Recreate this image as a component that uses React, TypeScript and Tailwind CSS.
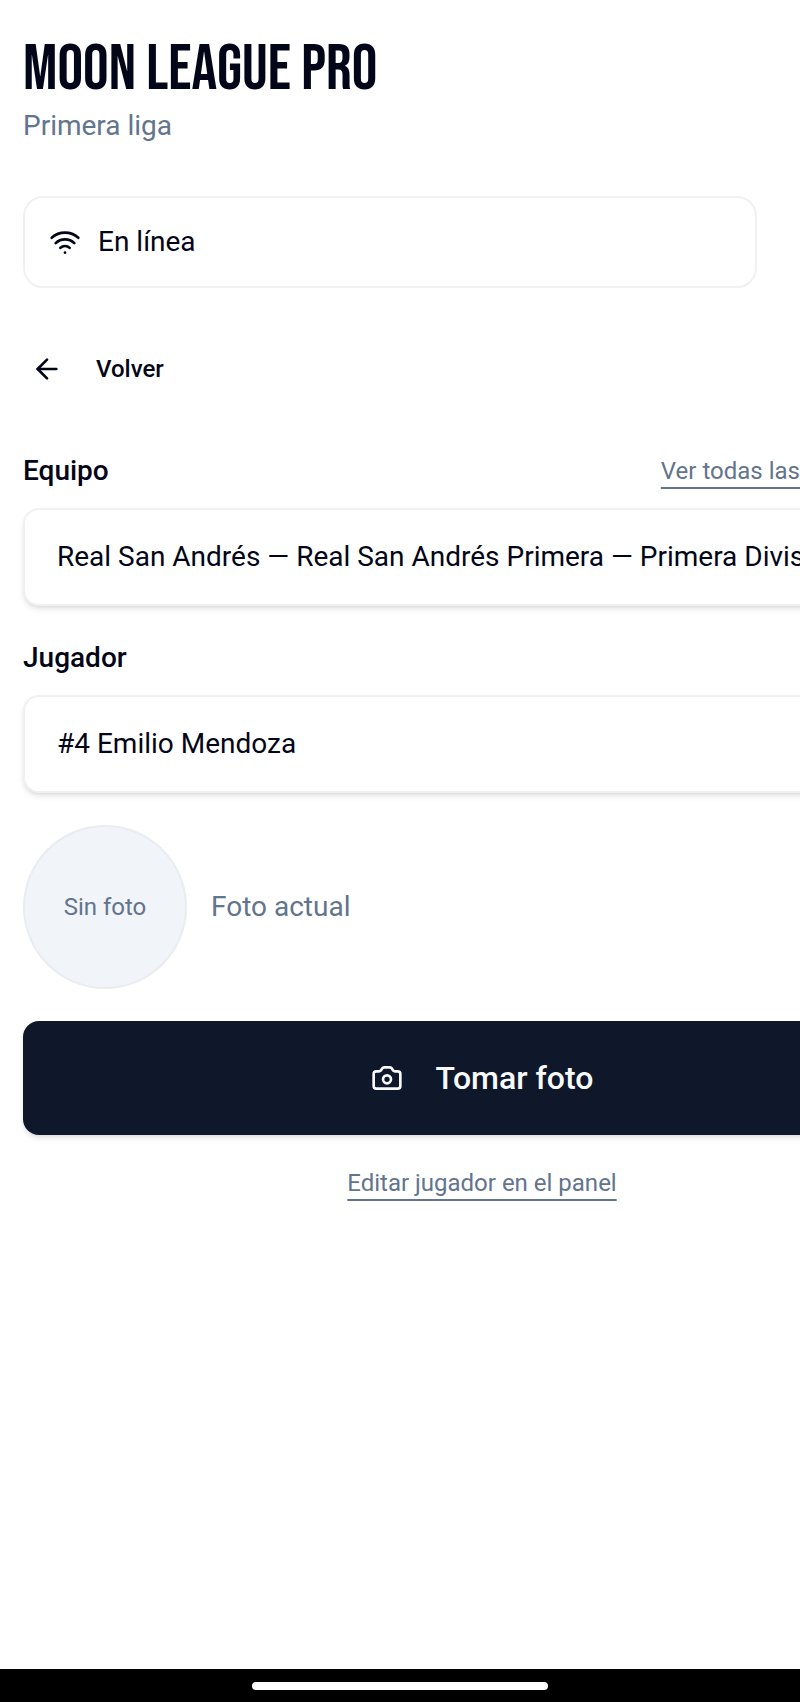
import { ArrowLeft, Camera, Wifi } from 'lucide-react';

const teams = ['Real San Andrés — Real San Andrés Primera — Primera División'];
const players = ['#4 Emilio Mendoza'];

const selectClass =
    'w-full appearance-none rounded-2xl border-2 border-gray-200/60 bg-white py-[27px] pl-8 pr-24 text-[28px] leading-[40px] shadow-md shadow-black/10';

const linkClass =
    'text-[24px] leading-[32px] text-slate-500 underline decoration-2 underline-offset-8 [text-decoration-skip-ink:none]';

export default function App() {
    return (
        <div className="flex min-h-screen flex-col bg-white font-['Roboto','Liberation_Sans',sans-serif] text-slate-950">
            <main className="flex-1 overflow-x-hidden px-[23px] pt-[38px]">
                <header>
                    <h1 className="font-['Bebas_Neue','Roboto_Condensed','Liberation_Sans_Narrow',sans-serif] text-[64px] leading-[64px] font-normal whitespace-nowrap">
                        MOON LEAGUE PRO
                    </h1>
                    <p className="mt-1 text-[28px] leading-[40px] text-slate-500">Primera liga</p>
                </header>

                <div className="mr-5 mt-[50px] flex items-center gap-[17px] rounded-[20px] border-2 border-gray-200/60 px-6 py-6 text-[28px] leading-[40px]">
                    <Wifi className="h-8 w-8" />
                    <span>En línea</span>
                </div>

                <button type="button" className="mt-[49px] flex items-center gap-[33px] px-2 py-4 text-[24px] font-medium leading-[32px]">
                    <ArrowLeft className="h-8 w-8" />
                    Volver
                </button>

                <form className="mt-[50px] flex w-max min-w-full flex-col gap-8">
                    <div className="flex flex-col gap-[17px]">
                        <div className="flex items-center justify-between">
                            <label htmlFor="team" className="text-[28px] font-medium leading-[40px]">
                                Equipo
                            </label>
                            <a href="#credenciales" className={linkClass}>
                                Ver todas las credenciales
                            </a>
                        </div>
                        <select id="team" className={selectClass}>
                            {teams.map((team) => (
                                <option key={team}>{team}</option>
                            ))}
                        </select>
                    </div>

                    <div className="flex flex-col gap-[17px]">
                        <label htmlFor="player" className="text-[28px] font-medium leading-[40px]">
                            Jugador
                        </label>
                        <select id="player" className={selectClass}>
                            {players.map((player) => (
                                <option key={player}>{player}</option>
                            ))}
                        </select>
                    </div>

                    <div className="flex items-center gap-6">
                        <div className="flex h-[164px] w-[164px] items-center justify-center rounded-full border-2 border-gray-200/60 bg-slate-100 text-[24px] leading-[32px] text-slate-500">
                            Sin foto
                        </div>
                        <p className="text-[28px] leading-[40px] text-slate-500">Foto actual</p>
                    </div>

                    <button
                        type="button"
                        className="flex h-[114px] items-center justify-center gap-[33px] rounded-2xl bg-[#0f172a] text-[32px] font-medium leading-[40px] text-slate-50 shadow-md shadow-black/10"
                    >
                        <Camera className="h-8 w-8" />
                        Tomar foto
                    </button>

                    <a href="#panel" className={`self-center ${linkClass}`}>
                        Editar jugador en el panel
                    </a>
                </form>
            </main>

            <footer className="flex h-[33px] items-center justify-center bg-black">
                <div className="h-2 w-[37%] rounded-full bg-white" />
            </footer>
        </div>
    );
}
